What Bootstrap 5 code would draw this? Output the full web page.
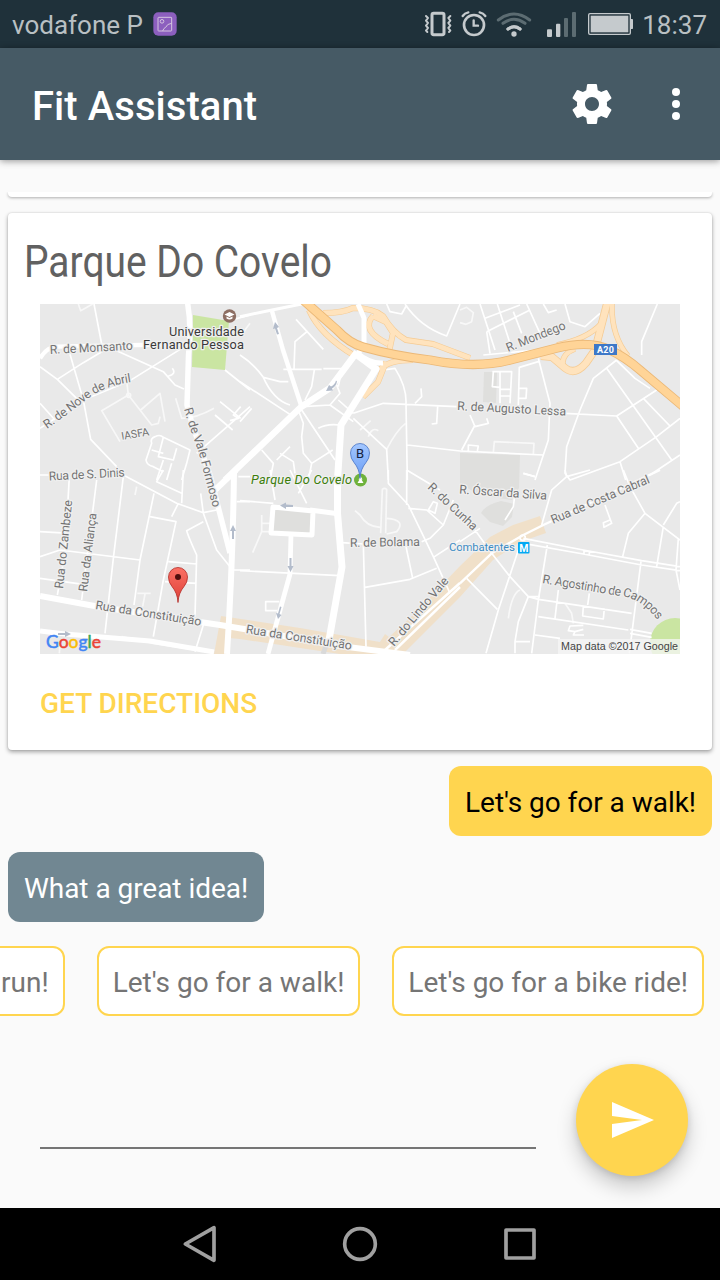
<!DOCTYPE html>
<html lang="en">
<head>
<meta charset="utf-8">
<meta name="viewport" content="width=device-width, initial-scale=1">
<title>Fit Assistant</title>
<link href="https://cdn.jsdelivr.net/npm/bootstrap@5.3.0/dist/css/bootstrap.min.css" rel="stylesheet">
<style>
body{font-family:Roboto,"Liberation Sans",sans-serif;background:#fafafa;width:720px;height:1280px;overflow:hidden}
svg{display:block;flex:none}
.status-bar{height:48px;background:#1f313a;color:#b9c0c3;font-size:26px;line-height:48px;padding:2px 13px 0 12px}
.app-bar{height:112px;background:#465a65;color:#fff;box-shadow:0 1px 7px rgba(0,0,0,.42);padding:0 20px 0 32px}
.app-title{font-size:40px;font-weight:500;line-height:48px;padding-top:6px;letter-spacing:.05px}
.feed{margin-top:32px;padding:0 8px;height:730px}
.feed .card{border:0;border-radius:4px;box-shadow:0 2px 4px rgba(0,0,0,.34),0 0 2px rgba(0,0,0,.14)}
.prev-clip{height:21px;overflow:hidden;margin:0 -8px;padding:0 8px}
.feed .prev-card{height:5px;border-radius:0 0 4px 4px;box-shadow:0 1px 3px rgba(0,0,0,.3)}
.place-card{height:537px}
.link-btn{color:#ffd54f;font-size:28px;font-weight:500;line-height:36px;padding:0;border:0;background:none}
.bubble{font-size:28px;line-height:38px;padding:18px 16px 14px;border-radius:12px;height:70px;white-space:nowrap;letter-spacing:-.04px}
.mine{background:#ffd54f;color:#000}
.bot{background:#718792;color:#fff}
.chip{background:#fff;border:2px solid #ffd54f;color:#757575;padding:16px 14px 12px;flex:none;letter-spacing:0}
.suggest{margin-top:24px;gap:32px;padding-right:16px}
.composer{padding:48px 32px 0 40px}
.entry{width:496px;height:85px;border:0;border-bottom:2px solid #757575;background:transparent;border-radius:0}
.send-btn{width:112px;height:112px;border-radius:50%;background:#ffd54f;border:0;box-shadow:0 11px 20px rgba(0,0,0,.2),0 2px 7px rgba(0,0,0,.12)}
.nav-keys{height:72px;background:#000}
.minor{fill:none;stroke:#fff;stroke-width:5;stroke-linejoin:round}
.faint{fill:none;stroke:#f8f8f8;stroke-width:5;stroke-linejoin:round}
.major{fill:none;stroke:#fff;stroke-linejoin:round}
.lbl text{font-size:12.300px;fill:#737373;stroke:#efefef;stroke-width:2.6px;paint-order:stroke;stroke-linejoin:round}
.arw{fill:#b3bccb}
</style>
</head>
<body class="d-flex flex-column">
<header>
  <div class="status-bar d-flex align-items-center">
    <span>vodafone P</span>
    <svg style="margin-left:10px;margin-top:-2px" width="24" height="24" viewBox="0 0 72 72"><rect x="1" y="1" width="70" height="70" rx="15" fill="#8c5fbe"/><g fill="none" stroke="#d4c5df" stroke-width="3"><rect x="15" y="16" width="41" height="41" rx="2"/><circle cx="27" cy="28" r="5.500"/><path d="M29 57Q32 48 38 46Q42 35 56 34"/></g></svg>
    <svg class="ms-auto" style="margin-top:-2px" width="214" height="48" viewBox="60 0 642 144">
      <g fill="none" stroke="#c5cacd" stroke-linejoin="round" stroke-linecap="round">
        <rect x="96" y="40" width="36" height="64" rx="5" stroke-width="9"/>
        <path stroke-width="6" d="M78 48l6 6-6 8 6 7-6 8 6 7-6 8 4 4M151 48l-6 6 6 8-6 7 6 8-6 7 6 8-4 4"/>
        <circle cx="222" cy="75" r="30" stroke-width="8"/><path stroke-width="7" stroke-linejoin="miter" d="M221 61V77H234M188 48Q194 39 205 37M256 48Q250 39 239 37"/>
        <path stroke-width="9" d="M324 87Q342 74 360 87"/><path stroke-width="9" stroke="#5c6c72" d="M309 70Q342 46 375 70M295 60Q342 24 389 60"/>
        <path stroke-width="9" d="M324 87Q342 74 360 87"/>
        <rect x="566" y="41" width="125" height="62" rx="4" stroke-width="4"/>
      </g>
      <g fill="#c5cacd"><circle cx="342" cy="102" r="8"/><rect x="441" y="88" width="15" height="23" rx="3"/><rect x="468" y="71" width="13" height="40" rx="3"/><rect x="572" y="47" width="113" height="50"/><rect x="691" y="57" width="8" height="30" rx="2"/></g>
      <g fill="#5c6c72"><rect x="492" y="54" width="12" height="57" rx="3"/><rect x="516" y="36" width="12" height="75" rx="3"/></g>
    </svg>
    <span style="margin-left:8px">18:37</span>
  </div>
  <nav class="app-bar d-flex align-items-center position-relative">
    <span class="app-title">Fit Assistant</span>
    <svg class="ms-auto" width="48" height="48" viewBox="0 0 24 24" fill="#fff"><path d="M19.43 12.98c.04-.32.07-.64.07-.98s-.03-.66-.07-.98l2.11-1.65c.19-.15.24-.42.12-.64l-2-3.46c-.12-.22-.39-.3-.61-.22l-2.49 1c-.52-.4-1.08-.73-1.69-.98l-.38-2.65C14.46 2.180 14.250 2 14 2h-4c-.25 0-.46.18-.49.42l-.38 2.650c-.61.25-1.170.59-1.690.98l-2.490-1c-.23-.09-.49 0-.61.22l-2 3.460c-.13.22-.07.49.12.64l2.110 1.650c-.04.32-.07.65-.07.98s.03.66.07.98l-2.110 1.650c-.19.15-.24.42-.12.64l2 3.460c.12.22.39.3.61.22l2.490-1c.52.4 1.080.73 1.690.98l.38 2.650c.03.24.24.42.49.42h4c.25 0 .46-.18.49-.42l.38-2.650c.61-.25 1.170-.59 1.690-.98l2.490 1c.23.09.49 0 .61-.22l2-3.460c.12-.22.07-.49-.12-.64l-2.110-1.650zM12 15.500c-1.930 0-3.500-1.570-3.500-3.500s1.570-3.500 3.500-3.500 3.500 1.570 3.500 3.500-1.570 3.500-3.500 3.500z"/></svg>
    <svg style="margin-left:36px" width="48" height="48" viewBox="0 0 24 24" fill="#fff"><circle cx="12" cy="6" r="2"/><circle cx="12" cy="12" r="2"/><circle cx="12" cy="18" r="2"/></svg>
  </nav>
</header>

<main class="feed d-flex flex-column">
  <div class="prev-clip"><div class="card prev-card"></div></div>
  <article class="card place-card">
    <svg width="704" height="91" viewBox="8 213 704 91" role="img"><text x="24" y="276.500" font-size="45" fill="#616161" textLength="308" lengthAdjust="spacingAndGlyphs">Parque Do Covelo</text></svg>
    <svg class="mx-auto" width="640" height="350" viewBox="40 304 640 350">
      <rect x="40" y="304" width="640" height="350" fill="#e9e9e9"/>
      <!-- parks, squares and pedestrian areas -->
      <path fill="#cae5a2" d="M193 315L229 321 225 370 192 367Z"/>
      <circle cx="675" cy="643" r="25" fill="#cae5a2"/>
      <g fill="#dfdfdd"><path d="M460 453L520 455 519 488 512 500 480 495 460 484ZM484 372L497 372 496 403 483 402Z"/><path d="M481 513Q485 505 501 501L514 504 512 517 503 526 490 522Z"/></g>
      <path fill="#f0e0c9" d="M221 616L300 628 340 635 380 642 385 634 389 637 410 618 460 566 490 537 513 525 540 516 546 533 520 542 493 560 460 597 403 654 340 654 240 639 229 638 228 654 214 654Z"/>
      <!-- faint lanes -->
      <g class="faint">
        <g transform="translate(30 290) scale(.33333)"><path d="M290 272L295 315 215 362 270 455M295 315L365 405 385 400 390 380M332 360L390 310 405 395M437 325L455 385Q500 385 552 355M145 42L152 62 188 42"/><circle cx="296" cy="316" r="6"/></g>
        <g transform="translate(240 290) scale(.33333)"><path d="M440 478Q470 420 497 400M360 420L392 392M385 440Q395 410 415 422M0 140L30 100"/></g>
        <g transform="translate(460 290) scale(.33333)"><path d="M0 60L20 52 40 68 35 95 18 103 0 98M100 487L103 455 222 460 220 492"/></g>
        <g transform="translate(30 470) scale(.33333)"><path d="M322 370H362M345 372L338 410M320 50L315 75M88 550L90 520M275 500L370 520 550 548"/></g>
        <g transform="translate(240 470) scale(.33333)"><path stroke-width="5" d="M422 190L427 58Q433 52 440 58L437 190"/><path d="M345 122L360 135Q380 170 420 172M440 145Q500 150 470 185L440 192M65 135V185L38 248M65 185H90M65 160H90"/></g>
        <g transform="translate(460 470) scale(.33333)"><path d="M180 360Q155 370 145 445M315 400L335 430 340 460"/></g>
      </g>
      <!-- local streets -->
      <g class="minor">
        <g transform="translate(30 290) scale(.33333)">
          <path d="M192 42L219 183M30 230L82 268 160 218 219 183M120 193L160 330 182 448 260 530M82 268L155 340M255 180L400 245 435 285 462 297M427 235Q440 252 415 258M30 340L75 390M30 415L160 330 300 272 460 172M585 240L660 300M598 92L660 75M555 375L608 420M570 335L632 385M632 350L610 375 625 385 600 392M660 350L500 490M30 555H70"/>
          <path d="M375 440Q360 445 365 460L348 510Q350 525 370 530L400 545M375 440Q390 432 400 442L480 480 470 520 455 570M400 442L385 500 430 510 440 475M365 480L400 490M400 510L380 570M425 520L410 570"/>
          <path stroke-width="13" d="M30 205Q50 172 80 170L480 162"/>
        </g>
        <g transform="translate(240 290) scale(.33333)">
          <path d="M168 88L250 178M203 123L165 155 162 238M130 238H245M250 236H305M223 240L215 290 195 330M0 195Q40 220 70 262L120 275 145 275M70 262Q100 330 150 345M0 275L160 380M0 395L35 355M305 240L295 290M290 285L300 310 270 345 190 350M270 345L340 395M295 330L340 370M175 360L190 400 185 440 190 490 215 520 205 570M185 360L285 510M235 415Q260 400 300 405M65 480L100 520 90 570M150 470L110 510M120 490L160 515 165 550M215 520L278 480"/>
          <path d="M340 370L430 340 650 350M543 295L545 320 525 340M593 350L590 400 575 402M430 240L465 235Q500 290 498 340L502 570M340 385L440 478 445 570M502 465L660 483M440 42L450 65 485 72 500 45M495 42Q540 110 620 138L660 42"/>
          <path stroke-width="9" d="M0 80L85 62 185 42"/>
        </g>
        <g transform="translate(460 290) scale(.33333)">
          <path d="M60 42L105 180M70 195L230 180M112 42L150 160M75 85L180 45M80 125L210 60M80 125L90 190M160 65L185 130M200 42L240 130M250 42L265 68 290 60M315 42L330 95 375 110 420 70M592 42L545 155V195M235 205L270 340 265 450 225 570M178 230L175 345M178 232L235 215M97 245H155L150 340M100 245L97 290 120 292M120 245V340M120 298H150M120 318H150M175 295H200L198 325H175"/>
          <path d="M315 370L470 378 590 300M470 210L400 265 360 360 320 470 315 550 330 570 480 515 590 440 660 385M440 235L635 510M470 378L535 475M550 325L630 408M470 212L525 265 570 295M480 515L497 570M660 495L570 555M0 483L250 495M80 385L85 400 45 410 30 375M45 405L5 480M25 485V465L55 468 52 483M190 550L225 560"/>
        </g>
        <g transform="translate(30 470) scale(.33333)">
          <path d="M30 185L120 190M30 260L90 240 330 270M30 325L160 343M118 20L105 250 82 375M200 30L155 390M280 20L250 265 225 490M270 10L440 100 520 128 560 120M372 70L330 270 312 405M360 140L438 155 400 330 370 500M415 275L500 282M405 335L500 340M445 100L425 140M520 155L470 182Q475 200 500 255L495 440M512 70L520 130 560 240 600 290M620 95H660M610 300H660M625 20H660M520 465L495 545M455 100L460 0M400 0L380 35 455 70"/>
        </g>
        <g transform="translate(240 470) scale(.33333)">
          <path d="M0 92L100 100M0 302L300 317M118 395H77V422H112M90 0L105 90M150 0Q180 60 200 100M215 0L175 70M305 218L370 222 378 530M375 352L510 328 590 295M497 225L518 325M445 0V40L505 105 580 260 630 370M500 0V105M500 0L600 60M505 115L560 120 610 165 570 205M640 90L610 165M565 120L580 95 592 100 585 130ZM545 215L570 205M580 262L660 210"/>
        </g>
        <g transform="translate(460 470) scale(.33333)">
          <path d="M315 0L320 20 275 60 245 165M320 20L390 0M190 10L225 20M165 70L160 110 135 150M490 0L510 50 555 130 660 210M555 130L505 190 488 260M435 105L455 160 432 172 430 158 450 150M610 170L590 290M610 165L650 100 660 95M655 205L648 300 660 360M190 205L370 240 545 272 660 290M190 220L370 252 545 285 660 302M372 240V252M388 242V254M262 225L235 390 215 550M175 240L115 420 78 550M20 325L112 418M45 180L95 250 150 320 205 380 235 388 515 430M205 380H240M205 380L175 455 165 515V550M165 515H210M543 275L508 550M295 360L285 445M235 440L505 480M388 370L383 405M370 408L368 438 430 447 433 415M225 495L300 505M370 466L330 468 325 482 345 485 340 495H372M345 485L370 478M510 478L575 490M510 490L575 502M0 215L60 175"/>
          <path stroke-width="7" d="M600 0L250 165 190 195 95 250 0 340"/><circle cx="188" cy="203" r="8"/>
        </g>
        <path stroke-width="2.500" d="M385 650L460 583M395 650L460 587"/>
      </g>
      <!-- slip roads -->
      <g fill="none" stroke-linejoin="round">
        <g stroke="#f5cb93">
          <path stroke-width="6" d="M323 313Q343 313 353 308 373 308 383 316 393 333 406 340L433 344 470 358M373 316Q360 330 388 344M373 316L386 322 393 333 389 352M309 310Q320 335 355 356M386 362L378 382 363 397M380 370Q387 360 413 360"/>
          <path stroke-width="8" d="M608 300L595 350 586 363Q575 376 565 368L552 357 541 356"/>
          <path stroke-width="5.500" d="M612 304Q611 335 628 356M601 324Q587 339 557 345M563 366Q561 354 575 349"/>
        </g>
        <g stroke="#ffe3bd">
          <path stroke-width="4.800" d="M323 313Q343 313 353 308 373 308 383 316 393 333 406 340L433 344 470 358M373 316Q360 330 388 344M373 316L386 322 393 333 389 352M309 310Q320 335 355 356M386 362L378 382 363 397M380 370Q387 360 413 360"/>
          <path stroke-width="6.500" d="M608 300L595 350 586 363Q575 376 565 368L552 357 541 356"/>
          <path stroke-width="4.200" d="M612 304Q611 335 628 356M601 324Q587 339 557 345M563 366Q561 354 575 349"/>
        </g>
      </g>
      <!-- main streets -->
      <g class="major">
        <path stroke-width="5.500" d="M187 300Q192 325 188.500 355L187 405Q190 420 210 475L230 553"/>
        <path stroke-width="4.500" d="M272 311L283 350 301 405"/>
        <path stroke-width="6.500" d="M225 480L301 407 330 388 357 352"/>
        <path stroke-width="7" d="M357 355L376 369 341 425 337.500 480V513L342 567 329 640"/>
        <path stroke-width="5" d="M358 304L364 318V345L357 355M357 353Q370 364 383 363"/>
        <path stroke-width="6" d="M234 470Q233 560 227 654M212 493L236 470"/>
        <path stroke-width="6" d="M40 596L100 607 220 625 250 630 340 646 410 655"/>
        <path stroke-width="5" d="M40 631L65 634 150 641 214 652"/>
        <path stroke-width="5" fill="#dfdfdd" d="M273 507L313 511 312 535 271 533Z"/>
        <path stroke-width="5" d="M310 510L340 514"/><path stroke-width="4.800" d="M291 534L290 574 268 654"/>
        <path stroke="#d9d9d9" stroke-width="5" d="M328 640L323 654"/>
      </g>
      <!-- A20 motorway -->
      <g fill="none"><path stroke="#ebb877" stroke-width="9.300" d="M302 299L337 330Q349 343 363 347 395 356 430 360 476 369 510 360L557 348Q590 340 610 350 625 357 640 370L685 408"/><path stroke="#ffd497" stroke-width="7.500" d="M302 299L337 330Q349 343 363 347 395 356 430 360 476 369 510 360L557 348Q590 340 610 350 625 357 640 370L685 408"/></g>
      <rect x="594" y="344" width="23" height="11" fill="#3d78c8"/><text x="597" y="353" font-size="9" font-weight="700" fill="#fff" textLength="17">A20</text>
      <!-- one-way arrows -->
      <g class="arw"><path d="M275 322l4 5-2 1 2 6-2 .5-2-6-2 .5z"/><path d="M326 391l3-6 2 1.500q4-2 5-6l1 1q-1 5-5 7l1 2z"/><path d="M233 525l3 6h-2v8h-2v-8h-2zM280 505.500l6-3v2l7 .5v2h-7v2zM290.500 572l-3-6h2v-8h2v8h2zM278 619l-2-6 2 .5 2-7 1.500.5-2 7 2 1zM71 634l-6-3v2h-7v2h7v2z"/></g>
      <!-- labels -->
      <defs>
        <path id="pAbril" d="M47 429L69 413 90 397Q105 386 132 382"/>
        <path id="pVale" d="M184 409Q190 430 198 450L214 512"/>
        <path id="pMond" d="M508 352L568 328"/>
        <path id="pCosta" d="M553 524L654 481"/>
        <path id="pAgos" d="M542 583L620 596Q642 598 659 622"/>
        <path id="pLindo" d="M394 647L452 578"/>
        <path id="pCunha" d="M427 488L477 535"/>
      </defs>
      <g class="lbl">
        <text transform="translate(50 354) rotate(-3)" textLength="83">R. de Monsanto</text>
        <text textLength="98"><textPath href="#pAbril">R. de Nove de Abril</textPath></text>
        <text transform="translate(122 440) rotate(-10)" style="font-size:11px" textLength="28">IASFA</text>
        <text transform="translate(49 480.500) rotate(-3)" textLength="76">Rua de S. Dinis</text>
        <text textLength="103"><textPath href="#pVale">R. de Vale Formoso</textPath></text>
        <text transform="translate(63 589) rotate(-84)" textLength="89">Rua do Zambeze</text>
        <text transform="translate(87 592) rotate(-83)" textLength="79">Rua da Aliança</text>
        <text transform="translate(95 609) rotate(9)" textLength="107">Rua da Constituição</text>
        <text transform="translate(245.500 633) rotate(9)" textLength="107">Rua da Constituição</text>
        <text textLength="63"><textPath href="#pMond">R. Mondego</textPath></text>
        <text transform="translate(457 410) rotate(3)" textLength="109">R. de Augusto Lessa</text>
        <text transform="translate(350 547) rotate(-1)" textLength="70">R. de Bolama</text>
        <text transform="translate(459 493.500) rotate(4)" textLength="88">R. Óscar da Silva</text>
        <text textLength="63"><textPath href="#pCunha">R. do Cunha</textPath></text>
        <text textLength="106"><textPath href="#pCosta">Rua de Costa Cabral</textPath></text>
        <text textLength="86"><textPath href="#pLindo">R. do Lindo Vale</textPath></text>
        <text textLength="125"><textPath href="#pAgos">R. Agostinho de Campos</textPath></text>
        <text x="169" y="335.500" style="fill:#3a3a3a;font-size:12.800px" textLength="75">Universidade</text>
        <text x="143" y="348.500" style="fill:#3a3a3a;font-size:12.800px" textLength="101">Fernando Pessoa</text>
        <text x="251" y="483.500" style="fill:#3c7d0b;font-size:12.800px" font-style="italic" textLength="101">Parque Do Covelo</text>
        <text x="449" y="551" style="fill:#3d8cc4;font-size:11.500px" textLength="66">Combatentes</text>
      </g>
      <rect x="518" y="542" width="11.500" height="11.500" rx="1" fill="#03a9f4"/><text x="519.200" y="551.500" font-size="10.500" font-weight="700" fill="#fff">M</text>
      <circle cx="229.500" cy="316" r="6.700" fill="#8d6e63"/><path fill="#fff" d="M224.500 314.500l5-2.500 5 2.500-5 2.500zM226.500 316.500v2q3 2 6 0v-2l-3 1.500z"/>
      <circle cx="360.500" cy="480" r="6.500" fill="#6fb23c"/><path fill="#fff" d="M360.500 476l2 3.500h-1l2 3.500h-6l2-3.500h-1z"/>
      <!-- pins -->
      <defs><linearGradient id="gb" x2="0" y2="1"><stop stop-color="#a3c7ff"/><stop offset="1" stop-color="#6a9df5"/></linearGradient><linearGradient id="gr" x2="0" y2="1"><stop stop-color="#fb7064"/><stop offset="1" stop-color="#dd4038"/></linearGradient></defs>
      <path fill="url(#gb)" stroke="#4672c4" stroke-width=".8" d="M360 478.500Q359.500 469 354 462.500 350.500 458.500 350.500 453a9.500 9.500 0 0 1 19 0Q369.500 458.500 366 462.500 360.500 469 360 478.500Z"/>
      <text x="360" y="458" text-anchor="middle" font-size="13" fill="#14233f">B</text>
      <path fill="url(#gr)" stroke="#b32a24" stroke-width=".8" d="M178 602.500Q177.500 593 172 586.500 168.500 582.500 168.500 577a9.500 9.500 0 0 1 19 0Q187.500 582.500 184 586.500 178.500 593 178 602.500Z"/><circle cx="178" cy="577" r="3" fill="#4f0f0d"/>
      <text x="46" y="648" font-family="Lato,sans-serif" font-size="17.500" textLength="55" lengthAdjust="spacingAndGlyphs"><tspan fill="#4285f4" stroke="#4285f4" stroke-width=".5">G</tspan><tspan fill="#ea4335" stroke="#ea4335" stroke-width=".5">o</tspan><tspan fill="#fbbc05" stroke="#fbbc05" stroke-width=".5">o</tspan><tspan fill="#4285f4" stroke="#4285f4" stroke-width=".5">g</tspan><tspan fill="#34a853" stroke="#34a853" stroke-width=".5">l</tspan><tspan fill="#ea4335" stroke="#ea4335" stroke-width=".5">e</tspan></text>
      <rect x="558" y="639" width="122" height="15" fill="#f5f5f5" fill-opacity=".75"/>
      <text x="561" y="650" font-family="Liberation Sans" font-size="10.700" fill="#444" textLength="117">Map data ©2017 Google</text>
    </svg>
    <div class="px-4"><button class="link-btn ms-2" style="margin-top:32px">GET DIRECTIONS</button></div>
  </article>
  <div class="bubble mine align-self-end mt-3">Let's go for a walk!</div>
  <div class="bubble bot align-self-start mt-3">What a great idea!</div>
</main>

<div class="suggest d-flex justify-content-end overflow-hidden">
  <div class="bubble chip">Let's go for a run!</div>
  <div class="bubble chip">Let's go for a walk!</div>
  <div class="bubble chip">Let's go for a bike ride!</div>
</div>

<div class="composer d-flex justify-content-between align-items-start">
  <input class="entry" type="text" aria-label="Message">
  <button class="send-btn d-flex align-items-center justify-content-center p-0" aria-label="Send"><svg width="48" height="48" viewBox="0 0 24 24" fill="#fff"><path d="M2 21L23 12 2 3V10L17 12 2 14z"/></svg></button>
</div>

<footer class="nav-keys mt-auto d-flex justify-content-center position-relative">
  <svg width="400" height="72" viewBox="0 24 1200 216" fill="none" stroke="#a0a0a0" stroke-width="11" stroke-linejoin="round"><path d="M162 83V181L76 132Z"/><circle cx="600" cy="132" r="46"/><rect x="1038" y="90" width="84" height="84"/></svg>
</footer>
<script src="https://cdn.jsdelivr.net/npm/bootstrap@5.3.0/dist/js/bootstrap.bundle.min.js"></script>
</body>
</html>
